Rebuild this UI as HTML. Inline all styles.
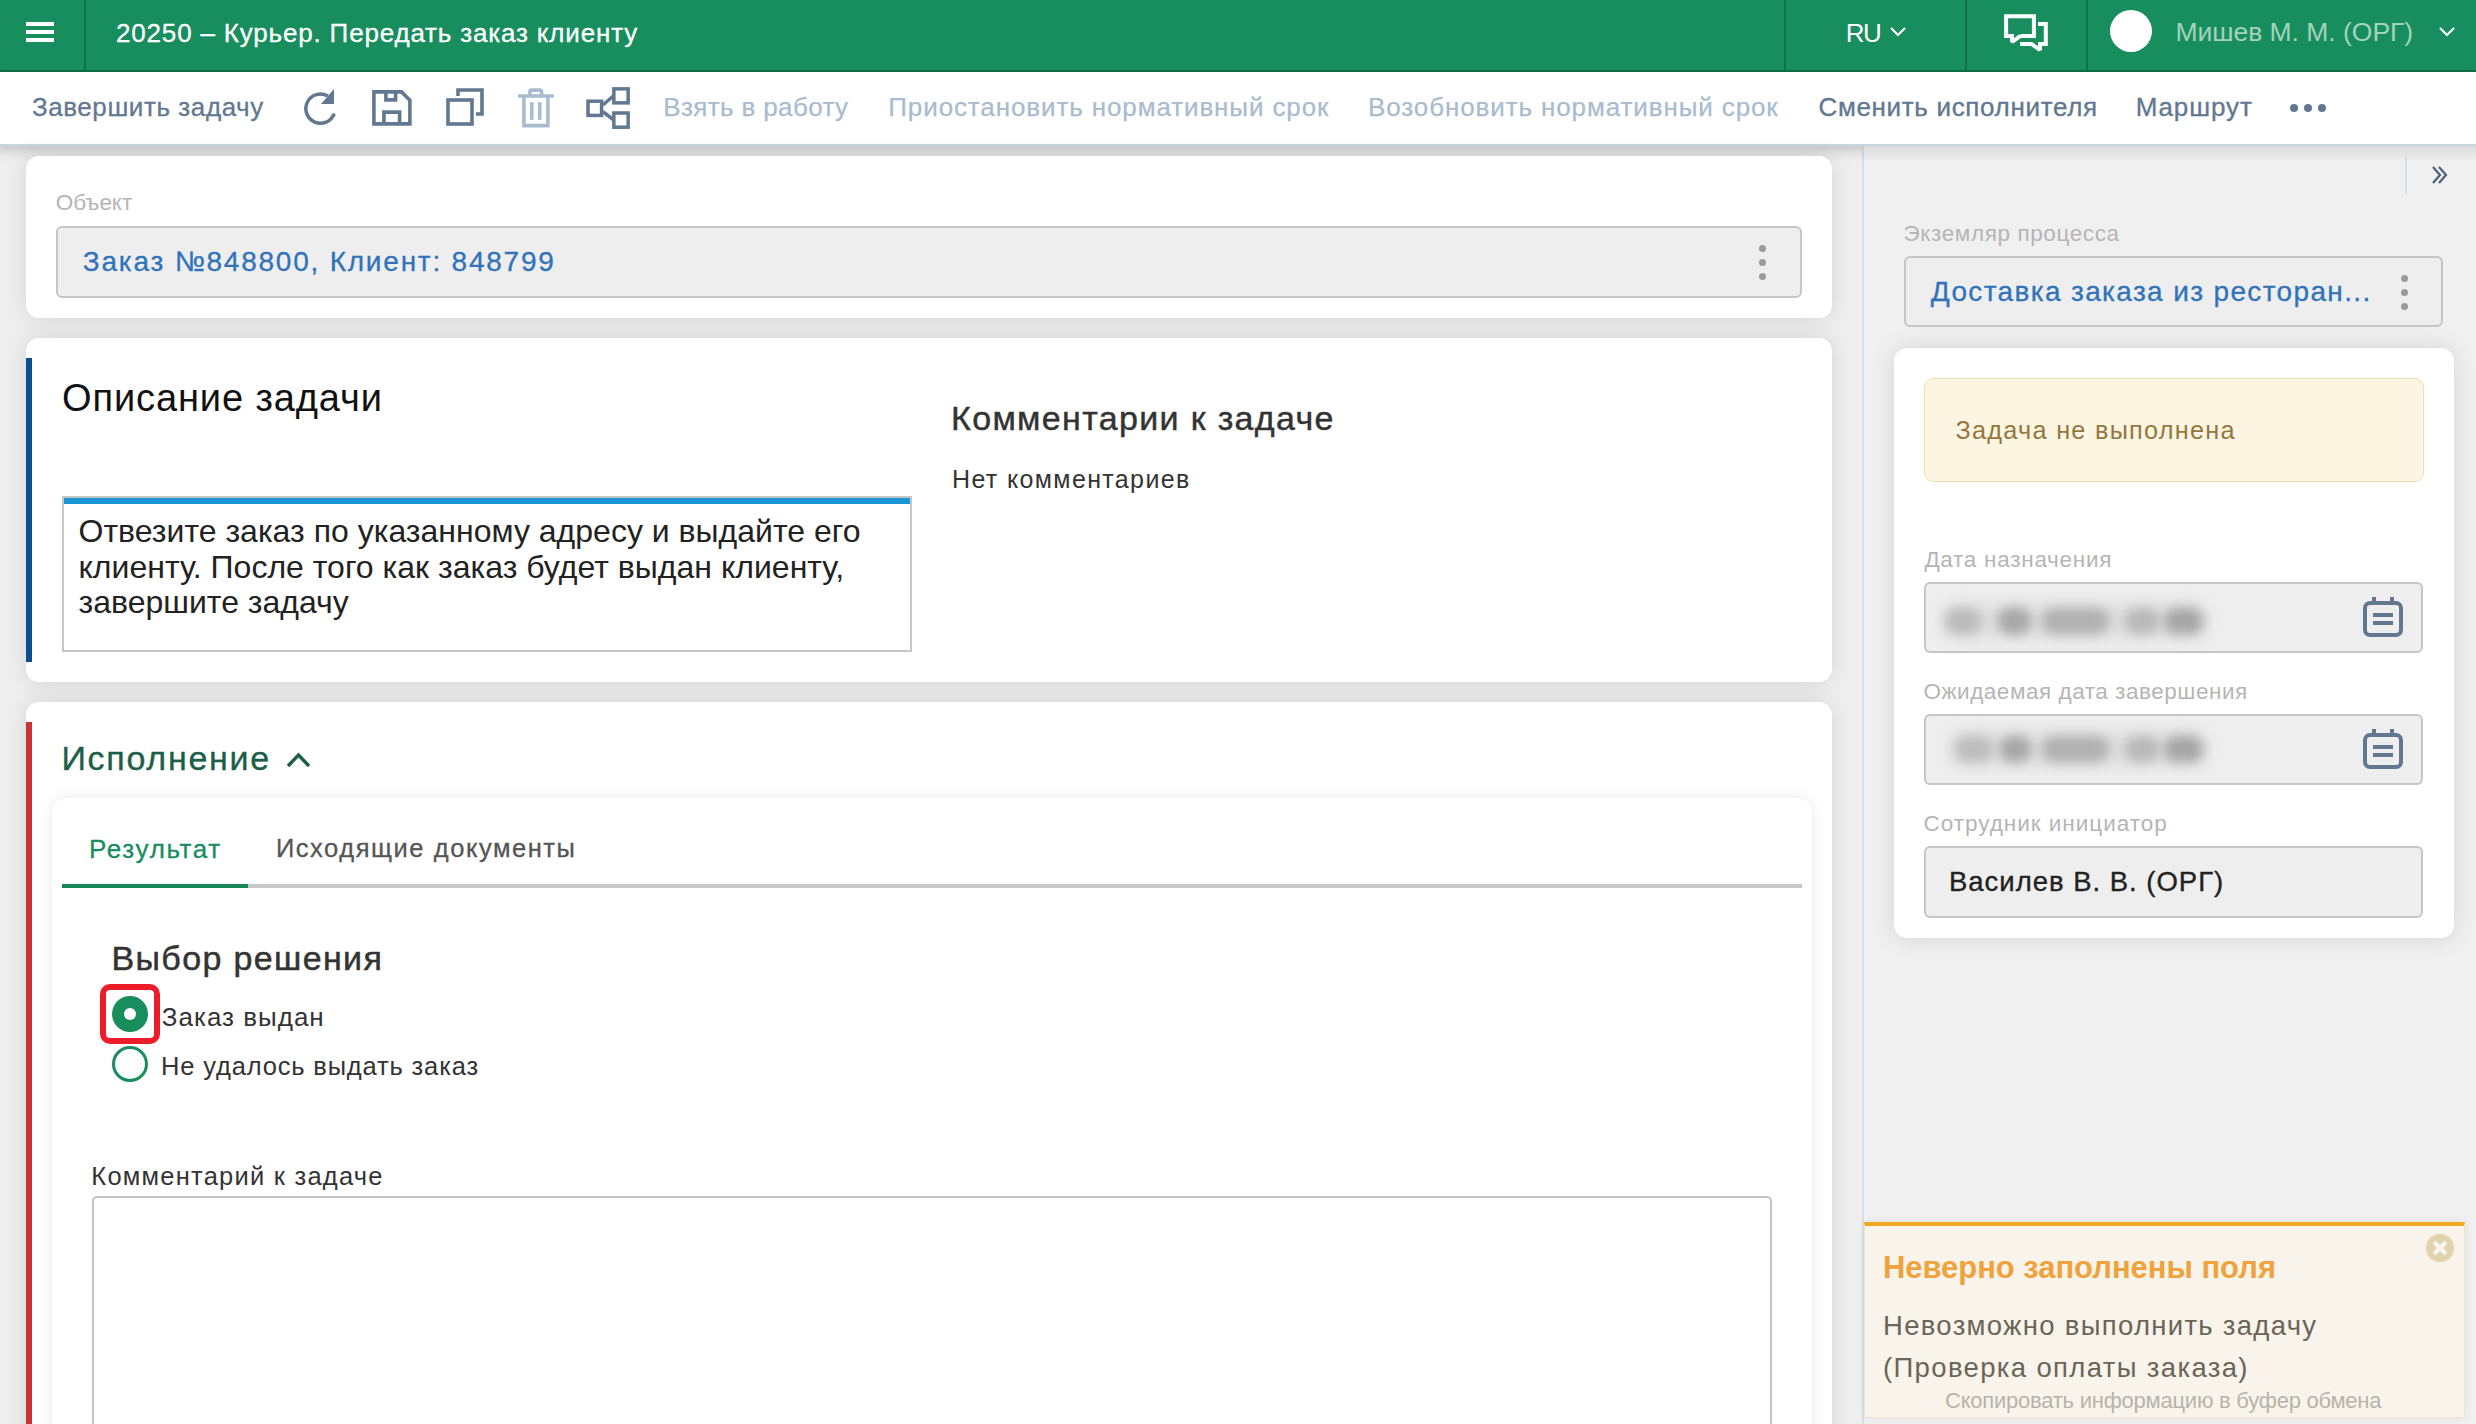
<!DOCTYPE html>
<html><head><meta charset="utf-8"><style>
*{box-sizing:border-box;margin:0;padding:0}
html,body{width:2476px;height:1424px;overflow:hidden;background:#efefef;font-family:"Liberation Sans",sans-serif;position:relative}
.t{position:absolute;white-space:nowrap}
.a{position:absolute}
.card{position:absolute;background:#fff;border-radius:13px;box-shadow:0 0 24px rgba(0,0,0,0.115)}
.inp{position:absolute;background:#eeeeee;border:2px solid #c6c6c6;border-radius:6px}
.dot{position:absolute;width:7px;height:7px;border-radius:50%;background:#9a9a9a}
</style></head><body>
<!-- header -->
<div class="a" style="left:0;top:0;width:2476px;height:72px;background:#188d5d;border-bottom:2px solid #0f6e47"></div>
<div class="a" style="left:26px;top:22px;width:28px;height:4px;background:#fff"></div>
<div class="a" style="left:26px;top:30px;width:28px;height:4px;background:#fff"></div>
<div class="a" style="left:26px;top:38px;width:28px;height:4px;background:#fff"></div>
<div class="a" style="left:84px;top:0;width:2px;height:70px;background:#10704a"></div>
<div class="a" style="left:1784px;top:0;width:2px;height:70px;background:#10704a"></div>
<div class="a" style="left:1965px;top:0;width:2px;height:70px;background:#10704a"></div>
<div class="a" style="left:2086px;top:0;width:2px;height:70px;background:#10704a"></div>
<svg class="a" style="left:1889px;top:26px" width="18" height="12" viewBox="0 0 18 12"><polyline points="2,2 9,9 16,2" fill="none" stroke="#fff" stroke-width="2.2"/></svg>
<svg class="a" style="left:2438px;top:26px" width="18" height="12" viewBox="0 0 18 12"><polyline points="2,2 9,9 16,2" fill="none" stroke="#fff" stroke-width="2.2"/></svg>
<svg class="a" style="left:2000px;top:10px" width="52" height="46" viewBox="2000 10 52 46"><g fill="none" stroke="#fff" stroke-width="4" stroke-linejoin="miter" stroke-miterlimit="2" stroke-linecap="butt"><path d="M2020.5 35.9 H2033.9 V16.15 H2006.1 V35.9 H2012 V42 L2020.5 35.9"/><path d="M2038 24.05 H2045.8 V43.9 H2040 V50 L2031.5 43.9 H2020.1"/></g></svg>
<div class="a" style="left:2110px;top:10px;width:42px;height:42px;border-radius:50%;background:#fff"></div>
<!-- toolbar -->
<div class="a" style="left:0;top:72px;width:2476px;height:74px;background:#fff;border-bottom:2px solid #cad5df;box-shadow:0 3px 8px rgba(0,0,0,0.08)"></div>
<!-- right panel -->
<div class="a" style="left:1862px;top:146px;width:614px;height:1278px;background:#f0f0f0;border-left:2px solid #d6dee6"></div>
<div class="a" style="left:2405px;top:157px;width:2px;height:37px;background:#d6dee6"></div>
<svg class="a" style="left:2430px;top:164px" width="20" height="22" viewBox="0 0 20 22"><g fill="none" stroke="#4b5f7a" stroke-width="2.2"><polyline points="3,3 10,11 3,19"/><polyline points="9,3 16,11 9,19"/></g></svg>
<div class="a" style="left:0;top:146px;width:2476px;height:16px;background:linear-gradient(rgba(0,0,0,0.095),rgba(0,0,0,0))"></div>
<!-- cards -->
<div class="card" style="left:26px;top:156px;width:1806px;height:162px"></div>
<div class="inp" style="left:56px;top:226px;width:1746px;height:72px"></div>
<div class="dot" style="left:1758.5px;top:244.5px"></div><div class="dot" style="left:1758.5px;top:258.5px"></div><div class="dot" style="left:1758.5px;top:272.5px"></div>
<div class="inp" style="left:1904px;top:256px;width:539px;height:71px"></div>
<div class="dot" style="left:2400.5px;top:274.5px"></div><div class="dot" style="left:2400.5px;top:288.5px"></div><div class="dot" style="left:2400.5px;top:302.5px"></div>

<div class="card" style="left:26px;top:338px;width:1806px;height:344px"></div>
<div class="a" style="left:26px;top:358px;width:6px;height:304px;background:#0d4c8f"></div>
<div class="a" style="left:62px;top:496px;width:850px;height:156px;border:2px solid #c6c6c6;background:#fff"></div>
<div class="a" style="left:64px;top:498px;width:846px;height:6px;background:#1a98d5"></div>

<div class="card" style="left:26px;top:702px;width:1806px;height:900px"></div>
<div class="a" style="left:26px;top:722px;width:6px;height:760px;background:#c83535"></div>
<svg class="a" style="left:285px;top:750px" width="28" height="20" viewBox="0 0 28 20"><polyline points="3,16 13.5,5 24,16" fill="none" stroke="#1d5e48" stroke-width="3.4"/></svg>
<div class="card" style="left:52px;top:798px;width:1760px;height:800px;border-radius:14px;box-shadow:0 0 14px rgba(0,0,0,0.09)"></div>
<div class="a" style="left:62px;top:884px;width:1740px;height:4px;background:#c8c8c8"></div>
<div class="a" style="left:62px;top:884px;width:186px;height:4px;background:#15885a"></div>
<div class="a" style="left:100px;top:984px;width:60px;height:60px;border:6px solid #ec1c2b;border-radius:10px"></div>
<div class="a" style="left:112px;top:996px;width:36px;height:36px;border-radius:50%;background:#188d5d"></div>
<div class="a" style="left:124px;top:1008px;width:12px;height:12px;border-radius:50%;background:#fff"></div>
<div class="a" style="left:112px;top:1046px;width:36px;height:36px;border-radius:50%;border:3.6px solid #188d5d"></div>
<div class="a" style="left:92px;top:1196px;width:1680px;height:400px;border:2px solid #c4c4c4;border-radius:5px"></div>

<!-- right card -->
<div class="card" style="left:1894px;top:348px;width:560px;height:590px"></div>
<div class="a" style="left:1924px;top:378px;width:500px;height:104px;background:#fcf5e2;border:1.5px solid #f4dfb2;border-radius:9px"></div>
<div class="inp" style="left:1924px;top:582px;width:499px;height:71px"></div>
<div class="a" style="left:1944px;top:604px;width:262px;height:34px;background:#dedede;filter:blur(7px);border-radius:14px"></div>
<div class="a" style="left:1945px;top:608px;width:36px;height:26px;background:#bababa;filter:blur(6px);border-radius:12px"></div>
<div class="a" style="left:1998px;top:608px;width:33px;height:26px;background:#a6a6a6;filter:blur(6px);border-radius:12px"></div>
<div class="a" style="left:2042px;top:608px;width:67px;height:26px;background:#b0b0b0;filter:blur(6px);border-radius:12px"></div>
<div class="a" style="left:2125px;top:608px;width:34px;height:26px;background:#b8b8b8;filter:blur(6px);border-radius:12px"></div>
<div class="a" style="left:2164px;top:608px;width:39px;height:26px;background:#a6a6a6;filter:blur(6px);border-radius:12px"></div>
<svg class="a" style="left:2363px;top:597px" width="42" height="40" viewBox="0 0 42 40"><g fill="none" stroke="#627891" stroke-width="4"><rect x="2" y="6" width="36" height="32" rx="5"/></g><g fill="#627891"><rect x="9" y="0" width="4" height="8"/><rect x="27" y="0" width="4" height="8"/><rect x="10" y="16" width="20" height="4"/><rect x="10" y="24" width="20" height="4"/></g></svg>
<div class="inp" style="left:1924px;top:714px;width:499px;height:71px"></div>
<div class="a" style="left:1950px;top:732px;width:256px;height:34px;background:#dedede;filter:blur(7px);border-radius:14px"></div>
<div class="a" style="left:1955px;top:736px;width:38px;height:26px;background:#bdbdbd;filter:blur(6px);border-radius:12px"></div>
<div class="a" style="left:2000px;top:736px;width:31px;height:26px;background:#a6a6a6;filter:blur(6px);border-radius:12px"></div>
<div class="a" style="left:2042px;top:736px;width:67px;height:26px;background:#b0b0b0;filter:blur(6px);border-radius:12px"></div>
<div class="a" style="left:2125px;top:736px;width:34px;height:26px;background:#b8b8b8;filter:blur(6px);border-radius:12px"></div>
<div class="a" style="left:2164px;top:736px;width:39px;height:26px;background:#a6a6a6;filter:blur(6px);border-radius:12px"></div>
<svg class="a" style="left:2363px;top:729px" width="42" height="40" viewBox="0 0 42 40"><g fill="none" stroke="#627891" stroke-width="4"><rect x="2" y="6" width="36" height="32" rx="5"/></g><g fill="#627891"><rect x="9" y="0" width="4" height="8"/><rect x="27" y="0" width="4" height="8"/><rect x="10" y="16" width="20" height="4"/><rect x="10" y="24" width="20" height="4"/></g></svg>
<div class="inp" style="left:1924px;top:846px;width:499px;height:72px"></div>

<!-- error toast -->
<div class="a" style="left:1864px;top:1222px;width:601px;height:196px;background:#f8f4ec;border:1px solid #efe5cf;border-top:4px solid #f0a91e;box-shadow:0 0 8px rgba(0,0,0,0.06)"></div>
<svg class="a" style="left:2426px;top:1234px" width="28" height="28" viewBox="0 0 28 28"><circle cx="14" cy="14" r="14" fill="#e3d2ae"/><g stroke="#f8f5ee" stroke-width="4.4"><line x1="8" y1="8" x2="20" y2="20"/><line x1="20" y1="8" x2="8" y2="20"/></g></svg>

<!-- toolbar icons -->
<svg class="a" style="left:300px;top:84px" width="340" height="48" viewBox="300 84 340 48">
<path d="M334.2 113.6 A14.6 14.6 0 1 1 327.8 96" fill="none" stroke="#627891" stroke-width="3.5"/>
<path d="M334 89 V104 H321 Z" fill="#627891"/>
<g fill="none" stroke="#627891" stroke-width="3.6" stroke-linejoin="miter">
<path d="M373.9 91.9 H401.5 L409.9 100.3 V123.9 H373.9 Z"/>
<path d="M385.9 91.9 V99.9 H395.6 V91.9"/>
<path d="M383.9 123.9 V112.1 H399.6 V123.9"/>
<rect x="448" y="100" width="24" height="24"/>
<path d="M458 96 V90 H482 V114 H476"/>
</g>
<g fill="none" stroke="#a9bbcf" stroke-width="3.6" stroke-linejoin="miter">
<path d="M523.9 97 V125.6 H547.9 V97"/>
<line x1="518" y1="96" x2="553.8" y2="96"/>
<path d="M529.9 95 V92 Q529.9 90.1 532 90.1 H539.5 Q541.6 90.1 541.6 92 V95"/>
<line x1="531.75" y1="102.2" x2="531.75" y2="119.8"/>
<line x1="539.75" y1="102.2" x2="539.75" y2="119.8"/>
</g>
<g fill="none" stroke="#627891" stroke-width="3.5" stroke-linejoin="miter">
<rect x="588" y="101.2" width="13.6" height="14.2"/>
<rect x="613.85" y="88.85" width="14.3" height="14"/>
<rect x="613.85" y="113" width="14.3" height="14.2"/>
<polyline points="601.6,104 604,104 613.85,95.5"/>
<polyline points="601.6,112.6 604,112.6 613.85,120"/>
</g>
</svg>
<div class="dot" style="left:2290px;top:103.8px;width:8px;height:8px;background:#627891"></div>
<div class="dot" style="left:2304px;top:103.8px;width:8px;height:8px;background:#627891"></div>
<div class="dot" style="left:2318px;top:103.8px;width:8px;height:8px;background:#627891"></div>

<div class="t" style="left:116.0px;top:19.7px;font-size:26px;line-height:26px;letter-spacing:0.824px;color:#fff;font-weight:400;-webkit-text-stroke:0.3px #fff;">20250 – Курьер. Передать заказ клиенту</div>
<div class="t" style="left:1845.8px;top:19.7px;font-size:26px;line-height:26px;letter-spacing:-1.5px;color:#fff;font-weight:400;">RU</div>
<div class="t" style="left:2175.4px;top:19.4px;font-size:26.5px;line-height:26.5px;letter-spacing:-0.025px;color:#a3d3bd;font-weight:400;">Мишев М. М. (ОРГ)</div>
<div class="t" style="left:31.9px;top:93.5px;font-size:26px;line-height:26px;letter-spacing:0.58px;color:#627891;font-weight:400;-webkit-text-stroke:0.3px #627891;">Завершить задачу</div>
<div class="t" style="left:663.3px;top:93.5px;font-size:26px;line-height:26px;letter-spacing:0.362px;color:#a9bbcf;font-weight:400;-webkit-text-stroke:0.25px #a9bbcf;">Взять в работу</div>
<div class="t" style="left:888.3px;top:93.5px;font-size:26px;line-height:26px;letter-spacing:0.886px;color:#a9bbcf;font-weight:400;-webkit-text-stroke:0.25px #a9bbcf;">Приостановить нормативный срок</div>
<div class="t" style="left:1368.0px;top:93.5px;font-size:26px;line-height:26px;letter-spacing:0.889px;color:#a9bbcf;font-weight:400;-webkit-text-stroke:0.25px #a9bbcf;">Возобновить нормативный срок</div>
<div class="t" style="left:1818.5px;top:93.5px;font-size:26px;line-height:26px;letter-spacing:0.661px;color:#627891;font-weight:400;-webkit-text-stroke:0.35px #627891;">Сменить исполнителя</div>
<div class="t" style="left:2135.7px;top:93.5px;font-size:26px;line-height:26px;letter-spacing:0.883px;color:#627891;font-weight:400;-webkit-text-stroke:0.35px #627891;">Маршрут</div>
<div class="t" style="left:55.8px;top:192.4px;font-size:22.5px;line-height:22.5px;letter-spacing:-0.04px;color:#b5b5b5;font-weight:400;">Объект</div>
<div class="t" style="left:82.8px;top:247.8px;font-size:28px;line-height:28px;letter-spacing:1.775px;color:#3073bb;font-weight:400;-webkit-text-stroke:0.3px #3073bb;">Заказ №848800, Клиент: 848799</div>
<div class="t" style="left:1903.6px;top:223.0px;font-size:22.5px;line-height:22.5px;letter-spacing:0.606px;color:#b5b5b5;font-weight:400;">Экземляр процесса</div>
<div class="t" style="left:1930.8px;top:277.8px;font-size:28px;line-height:28px;letter-spacing:1.352px;color:#3073bb;font-weight:400;-webkit-text-stroke:0.3px #3073bb;">Доставка заказа из ресторан...</div>
<div class="t" style="left:62.0px;top:378.8px;font-size:38px;line-height:38px;letter-spacing:0.893px;color:#111;font-weight:400;">Описание задачи</div>
<div class="t" style="left:78.5px;top:514.7px;font-size:32px;line-height:32px;letter-spacing:0.01px;color:#222;font-weight:400;">Отвезите заказ по указанному адресу и выдайте его</div>
<div class="t" style="left:78.5px;top:550.6px;font-size:32px;line-height:32px;letter-spacing:0.01px;color:#222;font-weight:400;">клиенту. После того как заказ будет выдан клиенту,</div>
<div class="t" style="left:78.5px;top:586.2px;font-size:32px;line-height:32px;letter-spacing:0.01px;color:#222;font-weight:400;">завершите задачу</div>
<div class="t" style="left:951.0px;top:400.9px;font-size:34px;line-height:34px;letter-spacing:1.337px;color:#333;font-weight:400;-webkit-text-stroke:0.45px #333;">Комментарии к задаче</div>
<div class="t" style="left:952.0px;top:466.5px;font-size:25px;line-height:25px;letter-spacing:1.36px;color:#333;font-weight:400;">Нет комментариев</div>
<div class="t" style="left:61.4px;top:741.0px;font-size:34px;line-height:34px;letter-spacing:1.733px;color:#1d5e48;font-weight:400;-webkit-text-stroke:0.35px #1d5e48;">Исполнение</div>
<div class="t" style="left:89.0px;top:836.2px;font-size:26px;line-height:26px;letter-spacing:1.625px;color:#188d5d;font-weight:400;-webkit-text-stroke:0.3px #188d5d;">Результат</div>
<div class="t" style="left:275.9px;top:835.8px;font-size:25.5px;line-height:25.5px;letter-spacing:1.55px;color:#555;font-weight:400;-webkit-text-stroke:0.3px #555;">Исходящие документы</div>
<div class="t" style="left:111.5px;top:940.9px;font-size:34px;line-height:34px;letter-spacing:1.358px;color:#333;font-weight:400;-webkit-text-stroke:0.5px #333;">Выбор решения</div>
<div class="t" style="left:161.8px;top:1003.7px;font-size:26px;line-height:26px;letter-spacing:1.0px;color:#333;font-weight:400;">Заказ выдан</div>
<div class="t" style="left:161.0px;top:1054.1px;font-size:25.5px;line-height:25.5px;letter-spacing:0.836px;color:#333;font-weight:400;">Не удалось выдать заказ</div>
<div class="t" style="left:91.3px;top:1163.9px;font-size:25.5px;line-height:25.5px;letter-spacing:1.232px;color:#333;font-weight:400;">Комментарий к задаче</div>
<div class="t" style="left:1955.5px;top:417.8px;font-size:25.3px;line-height:25.3px;letter-spacing:1.25px;color:#94773f;font-weight:400;">Задача не выполнена</div>
<div class="t" style="left:1924.4px;top:549.0px;font-size:22.5px;line-height:22.5px;letter-spacing:0.721px;color:#b5b5b5;font-weight:400;">Дата назначения</div>
<div class="t" style="left:1923.4px;top:681.3px;font-size:22.5px;line-height:22.5px;letter-spacing:0.538px;color:#b5b5b5;font-weight:400;">Ожидаемая дата завершения</div>
<div class="t" style="left:1923.6px;top:812.7px;font-size:22.5px;line-height:22.5px;letter-spacing:0.967px;color:#b5b5b5;font-weight:400;">Сотрудник инициатор</div>
<div class="t" style="left:1949.0px;top:867.8px;font-size:27.5px;line-height:27.5px;letter-spacing:0.983px;color:#222;font-weight:400;-webkit-text-stroke:0.35px #222;">Василев В. В. (ОРГ)</div>
<div class="t" style="left:1882.9px;top:1252.4px;font-size:31px;line-height:31px;letter-spacing:-0.043px;color:#f0a33c;font-weight:700;">Неверно заполнены поля</div>
<div class="t" style="left:1883.0px;top:1311.7px;font-size:27.5px;line-height:27.5px;letter-spacing:1.3px;color:#6b6457;font-weight:400;">Невозможно выполнить задачу</div>
<div class="t" style="left:1883.0px;top:1354.0px;font-size:27.5px;line-height:27.5px;letter-spacing:1.348px;color:#6b6457;font-weight:400;">(Проверка оплаты заказа)</div>
<div class="t" style="left:1945.0px;top:1390.1px;font-size:22px;line-height:22px;letter-spacing:-0.233px;color:#b8b3aa;font-weight:400;">Скопировать информацию в буфер обмена</div>
</body></html>
